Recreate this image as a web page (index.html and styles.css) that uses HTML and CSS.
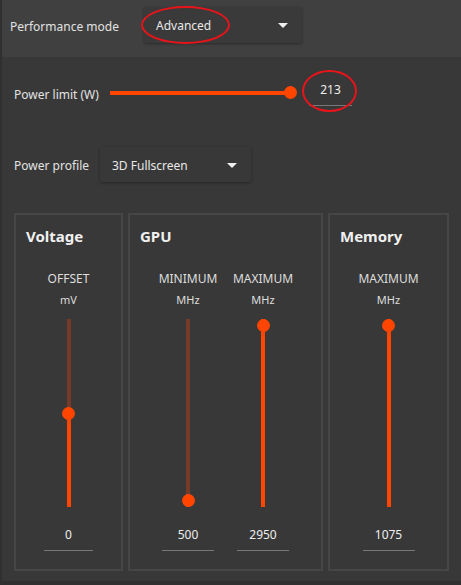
FILE: index.html
```html
<!DOCTYPE html>
<html>
<head>
<meta charset="utf-8">
<link rel="stylesheet" href="styles.css">
</head>
<body>
<div class="app">
  <div class="topbar">
    <span class="label perf-label">Performance mode</span>
    <div class="dropdown dd-perf">
      <span>Advanced</span>
      <span class="caret"></span>
      <span class="mark mark-adv"></span>
    </div>
  </div>
  <div class="main">
    <div class="row power-row">
      <span class="label power-label">Power limit (W)</span>
      <div class="hslider">
        <div class="htrack"></div>
        <div class="hthumb"></div>
      </div>
      <div class="hvalue">
        <span>213</span>
        <span class="mark mark-val"></span>
      </div>
    </div>
    <div class="row profile-row">
      <span class="label">Power profile</span>
      <div class="dropdown dd-profile">
        <span>3D Fullscreen</span>
        <span class="caret"></span>
      </div>
    </div>
    <div class="panels">
      <div class="panel p-volt">
        <div class="title">Voltage</div>
        <div class="cols">
          <div class="col">
            <div class="cap">OFFSET</div>
            <div class="unit">mV</div>
            <div class="vslider"><div class="vfill" style="height:94px"></div><div class="vthumb" style="top:94px"></div></div>
            <div class="val narrow">0</div>
          </div>
        </div>
      </div>
      <div class="panel p-gpu">
        <div class="title">GPU</div>
        <div class="cols">
          <div class="col">
            <div class="cap">MINIMUM</div>
            <div class="unit">MHz</div>
            <div class="vslider"><div class="vfill" style="height:7px"></div><div class="vthumb" style="top:181px"></div></div>
            <div class="val">500</div>
          </div>
          <div class="col">
            <div class="cap">MAXIMUM</div>
            <div class="unit">MHz</div>
            <div class="vslider"><div class="vfill" style="height:188px"></div><div class="vthumb" style="top:6px"></div></div>
            <div class="val">2950</div>
          </div>
        </div>
      </div>
      <div class="panel p-mem">
        <div class="title">Memory</div>
        <div class="cols">
          <div class="col">
            <div class="cap">MAXIMUM</div>
            <div class="unit">MHz</div>
            <div class="vslider"><div class="vfill" style="height:188px"></div><div class="vthumb" style="top:6px"></div></div>
            <div class="val">1075</div>
          </div>
        </div>
      </div>
    </div>
  </div>
  <div class="footer"></div>
</div>
</body>
</html>
```

FILE: styles.css
```css
html, body {
  margin: 0;
  padding: 0;
  background: #383838;
}
body {
  width: 461px;
  height: 585px;
  overflow: hidden;
  font-family: "Noto Sans", "Open Sans", sans-serif;
  color: #e2e2e2;
}
.app {
  width: 461px;
  height: 585px;
  box-sizing: border-box;
  border-left: 2px solid #303030;
  display: flex;
  flex-direction: column;
}
.topbar {
  height: 57px;
  flex: none;
  background: #404040;
  display: flex;
  align-items: flex-start;
  padding: 7px 0 0 8px;
  box-sizing: border-box;
}
.label {
  font-size: 12px;
  height: 36px;
  display: flex;
  align-items: center;
  padding-top: 2px;
  box-sizing: border-box;
  white-space: nowrap;
}
.perf-label {
  width: 134px;
}
.power-label {
  width: 96px;
}
.dropdown {
  position: relative;
  height: 36px;
  box-sizing: border-box;
  background: #3a3a3a;
  box-shadow: 0 1px 3px rgba(0,0,0,0.35);
  border-radius: 2px;
  display: flex;
  align-items: center;
  justify-content: space-between;
  padding: 1px 14px 0 12px;
  font-size: 12px;
  color: #e8e8e8;
}
.dd-perf {
  width: 158px;
}
.dd-profile {
  width: 151px;
  height: 35px;
  background: #383838;
}
.caret {
  width: 0;
  height: 0;
  border-left: 5px solid transparent;
  border-right: 5px solid transparent;
  border-top: 5px solid #f0f0f0;
}
.mark {
  position: absolute;
  border: 2px solid #e8141a;
  border-radius: 50%;
  box-sizing: border-box;
  pointer-events: none;
}
.mark-adv {
  left: -3px;
  top: -1px;
  width: 89px;
  height: 38px;
}
.main {
  flex: 1;
  padding: 0 12px 0 12px;
  display: flex;
  flex-direction: column;
}
.row {
  display: flex;
  align-items: center;
}
.power-row {
  height: 36px;
  margin-top: 18px;
}
.hslider {
  position: relative;
  width: 187px;
  height: 14px;
}
.htrack {
  position: absolute;
  left: 0;
  right: 6px;
  top: 5px;
  height: 4px;
  background: #ff4500;
}
.hthumb {
  position: absolute;
  right: 0;
  top: 0;
  width: 13px;
  height: 13px;
  border-radius: 50%;
  background: #ff4500;
}
.hvalue {
  position: relative;
  margin-left: 12px;
  margin-top: -4px;
  width: 43px;
  height: 30px;
  box-sizing: border-box;
  border-bottom: 1px solid #777;
  text-align: center;
  font-size: 12px;
  line-height: 28px;
  color: #eeeeee;
}
.mark-val {
  left: -7px;
  top: -6px;
  width: 55px;
  height: 42px;
}
.profile-row {
  margin-top: 36px;
  height: 35px;
}
.profile-row .label {
  width: 86px;
}
.panels {
  margin-top: 31px;
  display: flex;
  gap: 5px;
}
.panel {
  height: 358px;
  box-sizing: border-box;
  border: 2px solid #464646;
  padding: 11px 0 0 0;
}
.p-volt { width: 109px; }
.p-gpu { width: 195px; }
.p-mem { width: 121px; }
.title {
  font-size: 15px;
  font-weight: bold;
  line-height: 20px;
  padding-left: 10px;
  color: #f0f0f0;
}
.cols {
  display: flex;
  justify-content: center;
  margin-top: 25px;
}
.col {
  width: 75px;
  display: flex;
  flex-direction: column;
  align-items: center;
}
.cap {
  font-size: 12px;
  line-height: 16px;
  color: #dedede;
}
.unit {
  font-size: 11px;
  line-height: 16px;
  margin-top: 5px;
  color: #dedede;
}
.vslider {
  position: relative;
  width: 4px;
  height: 188px;
  margin-top: 11px;
  background: #773a27;
}
.vfill {
  position: absolute;
  left: 0;
  bottom: 0;
  width: 4px;
  background: #ff4500;
}
.vthumb {
  position: absolute;
  left: -4.5px;
  width: 13px;
  height: 13px;
  margin-top: -6.5px;
  border-radius: 50%;
  background: #ff4500;
}
.val {
  margin-top: 18px;
  width: 52px;
  height: 26px;
  box-sizing: border-box;
  border-bottom: 1px solid #777;
  text-align: center;
  font-size: 12px;
  line-height: 20px;
  color: #eeeeee;
}
.val.narrow {
  width: 49px;
}
.footer {
  height: 4px;
  flex: none;
  background: #303030;
}
```
